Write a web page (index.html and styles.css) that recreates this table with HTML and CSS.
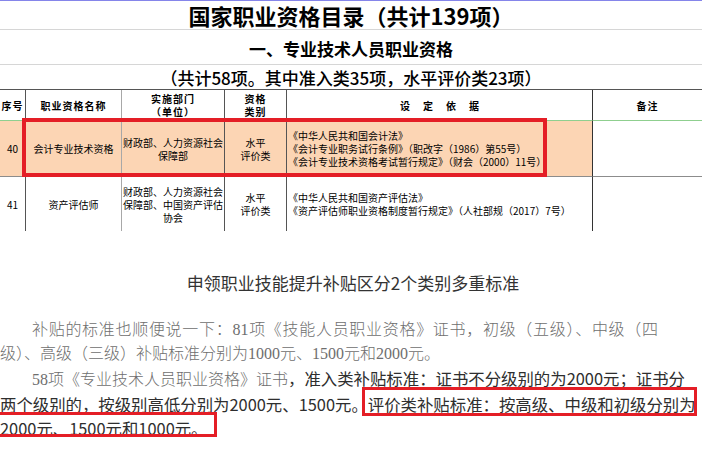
FILE: index.html
```html
<!DOCTYPE html>
<html lang="zh-CN">
<head>
<meta charset="utf-8">
<title>国家职业资格目录</title>
<link rel="stylesheet" href="styles.css">
</head>
<body>
<header class="sheet-head">
  <h1 class="doc-title">国家职业资格目录（共计139项）</h1>
  <h2 class="section-title">一、专业技术人员职业资格</h2>
  <p class="count-line">（共计58项。其中准入类35项，水平评价类23项）</p>
</header>

<div class="sheet">
  <div class="c h b-dark">序号</div>
  <div class="c h b-light">职业资格名称</div>
  <div class="c h b-dark">实施部门<br>（单位）</div>
  <div class="c h b-dark">资格<br>类别</div>
  <div class="c h b-strong"><span class="spaced">设定依据</span></div>
  <div class="c h">备注</div>

  <div class="c r1 hl b-dark">40</div>
  <div class="c r1 hl b-light">会计专业技术资格</div>
  <div class="c r1 hl b-dark">财政部、人力资源社会<br>保障部</div>
  <div class="c r1 hl b-dark">水平<br>评价类</div>
  <div class="c r1 hl b-strong basis">《中华人民共和国会计法》<br>《会计专业职务试行条例》（职改字（1986）第55号）<br>《会计专业技术资格考试暂行规定》（财会（2000）11号）</div>
  <div class="c r1"></div>

  <div class="c r2 b-dark">41</div>
  <div class="c r2 b-light">资产评估师</div>
  <div class="c r2 b-dark">财政部、人力资源社会<br>保障部、中国资产评估<br>协会</div>
  <div class="c r2 b-dark">水平<br>评价类</div>
  <div class="c r2 b-strong basis">《中华人民共和国资产评估法》<br>《资产评估师职业资格制度暂行规定》（人社部规（2017）7号）</div>
  <div class="c r2"></div>

  <div class="mark mark-row"></div>
</div>

<article class="article">
  <h3 class="article-title">申领职业技能提升补贴区分2个类别多重标准</h3>
  <p class="para para-serif">补贴的标准也顺便说一下：81项《技能人员职业资格》证书，初级（五级）、中级（四级）、高级（三级）补贴标准分别为1000元、1500元和2000元。</p>
  <p class="para para-mixed"><span class="serif">58项《专业技术人员职业资格》证书</span>，准入类补贴标准：证书不分级别的为2000元；证书分<br>两个级别的，按级别高低分别为2000元、1500元。评价类补贴标准：按高级、中级和初级分别为<br>2000元、1500元和1000元。<span class="mark mark-a"></span><span class="mark mark-b"></span></p>
</article>
</body>
</html>
```

FILE: styles.css
```css
* { box-sizing: border-box; }

html, body { margin: 0; padding: 0; }

body {
  width: 702px;
  height: 451px;
  overflow: hidden;
  background: #fff;
  color: #000;
  border-top: 1px solid #8585ea;
  font-family: "Noto Sans CJK SC", sans-serif;
}

/* ---------- sheet heading ---------- */
.sheet-head { margin: 0; }

.doc-title {
  margin: 0;
  height: 29px;
  line-height: 28px;
  border-bottom: 1px solid #d6d6d6;
  text-align: center;
  font-size: 22px;
  font-weight: 700;
}

.section-title {
  margin: 0;
  height: 35px;
  padding-top: 5px;
  line-height: 28px;
  border-bottom: 1px solid #d6d6d6;
  text-align: center;
  font-size: 17px;
  font-weight: 700;
}

.count-line {
  margin: 0;
  height: 24px;
  line-height: 26px;
  text-align: center;
  font-size: 17px;
  font-weight: 500;
}

/* ---------- table ---------- */
.sheet {
  position: relative;
  display: grid;
  grid-template-columns: 26px 96px 103px 62px 306px 109px;
  grid-template-rows: 31px 56px 54px;
  border-top: 1px solid #555;
}

.c {
  display: flex;
  align-items: center;
  justify-content: center;
  text-align: center;
  font-size: 10px;
  line-height: 13px;
  white-space: nowrap;
}

.b-dark { border-right: 1px solid #555; }
.b-light { border-right: 1px solid #a8a8a8; }
.b-strong { border-right: 1px solid #333; }

.h {
  font-weight: 700;
  letter-spacing: 1px;
  border-bottom: 1px solid #8fcf8f;
}

.spaced {
  letter-spacing: 13px;
  padding-left: 13px;
}

.r1 { border-bottom: 1px solid #8c8c8c; }
.hl { background: #fcd5b4; }

.basis {
  justify-content: flex-start;
  text-align: left;
  padding-left: 1px;
}

.mark {
  position: absolute;
  border: 3px solid #e41e26;
}

.mark-row {
  left: 22px;
  top: 28px;
  width: 525px;
  height: 59px;
  border-width: 4px;
}

/* ---------- article ---------- */
.article { margin: 0; }

.article-title {
  margin: 40px 0 0;
  padding-left: 4px;
  text-align: center;
  font-size: 17px;
  line-height: 24px;
  font-weight: 400;
  color: #333;
}

.para {
  margin: 0;
  line-height: 24px;
}

.para-serif {
  margin-top: 23px;
  margin-right: 44px;
  font-family: "Liberation Serif", "Noto Sans CJK SC", serif;
  font-size: 16px;
  font-weight: 300;
  color: #6e6e6e;
  text-indent: 2em;
  text-align: justify;
  text-align-last: left;
}

.para-mixed {
  position: relative;
  font-size: 16.4px;
  color: #2e2e2e;
  white-space: nowrap;
}

.para-mixed .serif {
  font-family: "Liberation Serif", "Noto Sans CJK SC", serif;
  font-size: 16px;
  font-weight: 300;
  color: #6e6e6e;
  padding-left: 32px;
}

.mark-a {
  left: 362px;
  top: 21px;
  width: 335px;
  height: 29px;
}

.mark-b {
  left: 0;
  top: 46px;
  width: 217px;
  height: 25px;
  border-left: 0;
}
```
